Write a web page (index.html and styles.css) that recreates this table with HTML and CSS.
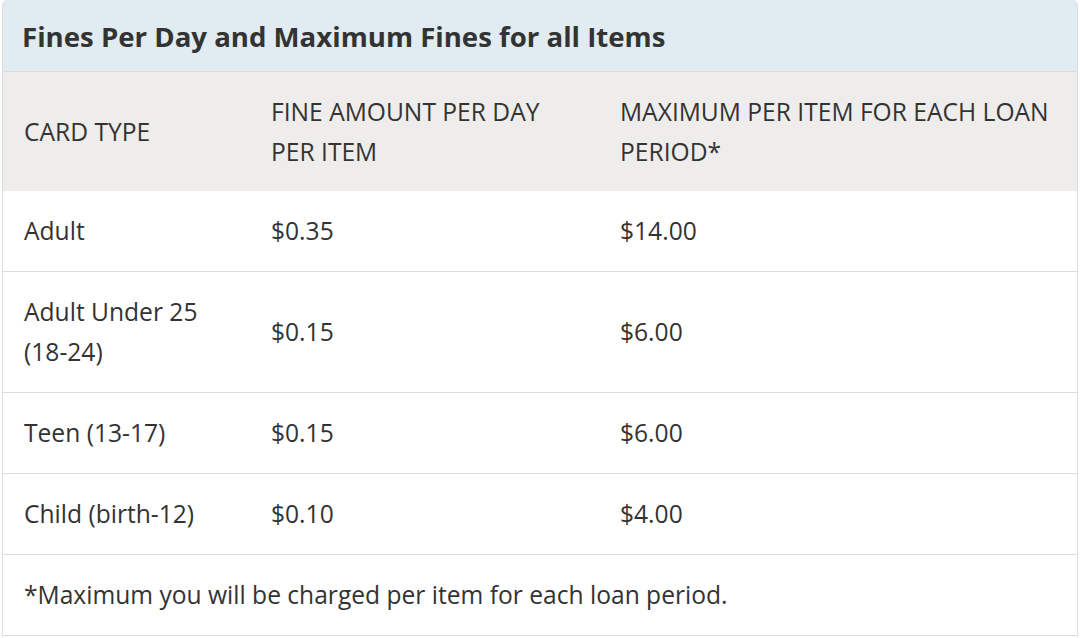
FILE: index.html
```html
<!DOCTYPE html>
<html lang="en">
<head>
<meta charset="utf-8">
<title>Fines Per Day and Maximum Fines for all Items</title>
<link rel="stylesheet" href="styles.css">
</head>
<body>
<div class="panel">
  <div class="panel-heading">Fines Per Day and Maximum Fines for all Items</div>
  <table class="fines">
    <colgroup>
      <col class="c1"><col class="c2"><col class="c3">
    </colgroup>
    <thead>
      <tr>
        <th>CARD TYPE</th>
        <th>FINE AMOUNT PER DAY PER ITEM</th>
        <th>MAXIMUM PER ITEM FOR EACH LOAN PERIOD*</th>
      </tr>
    </thead>
    <tbody>
      <tr><td>Adult</td><td>$0.35</td><td>$14.00</td></tr>
      <tr><td>Adult Under 25<br>(18-24)</td><td>$0.15</td><td>$6.00</td></tr>
      <tr><td>Teen (13-17)</td><td>$0.15</td><td>$6.00</td></tr>
      <tr><td>Child (birth-12)</td><td>$0.10</td><td>$4.00</td></tr>
    </tbody>
    <tfoot>
      <tr><td colspan="3">*Maximum you will be charged per item for each loan period.</td></tr>
    </tfoot>
  </table>
</div>
</body>
</html>
```
FILE: styles.css
```css
html, body {
  margin: 0;
  padding: 0;
  background: #ffffff;
}
body {
  font-family: "Open Sans", "Liberation Sans", sans-serif;
  color: #333333;
}
.panel {
  margin: 0 2px;
  border: 1px solid #dddddd;
  border-top: none;
  border-radius: 5px 5px 0 0;
  overflow: hidden;
}
.panel-heading {
  background: #e1ebf2;
  height: 72px;
  box-sizing: border-box;
  padding: 0 19px;
  display: flex;
  align-items: center;
  font-size: 27.6px;
  font-weight: 700;
  color: #333333;
  border-bottom: 1px solid #dcdcdc;
}
.fines {
  width: 100%;
  border-collapse: collapse;
  table-layout: fixed;
  font-size: 24.6px;
  line-height: 40px;
}
.c1 { width: 247px; }
.c2 { width: 349px; }
.fines th,
.fines td {
  text-align: left;
  vertical-align: middle;
  padding: 20px 21px;
  font-weight: 400;
}
.fines thead th {
  background: #efedeb;
  padding-top: 20px;
  padding-bottom: 19px;
}
.fines tbody td,
.fines tfoot td {
  border-top: 1px solid #dddddd;
}
.fines thead + tbody tr:first-child td {
  border-top: none;
}
.fines tfoot td {
  padding-top: 20px;
  padding-bottom: 20px;
}
```
